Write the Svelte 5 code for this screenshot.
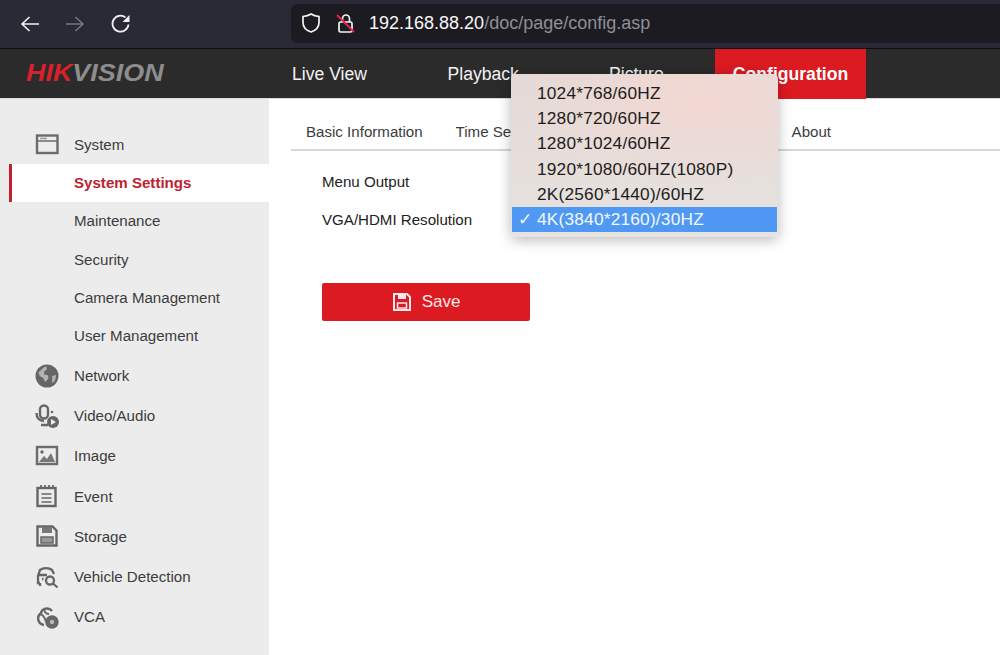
<script>
  const navItems = ["Live View", "Playback", "Picture", "Configuration"];
  const subItems = ["System Settings", "Maintenance", "Security", "Camera Management", "User Management"];
  const resolutions = ["1024*768/60HZ", "1280*720/60HZ", "1280*1024/60HZ", "1920*1080/60HZ(1080P)", "2K(2560*1440)/60HZ", "4K(3840*2160)/30HZ"];
  const bottomItems = [
    { key: "network", label: "Network" },
    { key: "video", label: "Video/Audio" },
    { key: "image", label: "Image" },
    { key: "event", label: "Event" },
    { key: "storage", label: "Storage" },
    { key: "vehicle", label: "Vehicle Detection" },
    { key: "vca", label: "VCA" }
  ];
</script>

<div class="page">
  <header class="browser">
    <div class="history">
      <svg width="20" height="20" viewBox="0 0 20 20" fill="none" stroke="#f2f2f4" stroke-width="1.6"><path d="M19 10H2M9.500 3 2 10l7.500 7"/></svg>
      <svg class="off" width="20" height="20" viewBox="0 0 20 20" fill="none" stroke="#77777f" stroke-width="1.500"><path d="M1 10h17M10.500 3l7.500 7-7.500 7"/></svg>
      <svg class="reload" width="20" height="20" viewBox="0 0 20 20" fill="none" stroke="#f2f2f4" stroke-width="1.800"><path d="M17.500 10.500A8 8 0 1 1 14.500 3.400"/><path d="M18.500 1v7h-7" fill="#f2f2f4" stroke="none"/></svg>
    </div>
    <div class="urlbar">
      <svg width="20" height="22" viewBox="0 0 20 22" fill="none" stroke="#f4f4f6" stroke-width="1.700"><path d="M10 2c2.500 1.700 5 2.300 8 2.500v6c0 4.500-3.500 8-8 9.500-4.500-1.500-8-5-8-9.500v-6C5 4.300 7.500 3.700 10 2z"/></svg>
      <svg class="lock" width="20" height="22" viewBox="0 0 20 22" fill="none"><path d="M6.500 10V6.500a3.500 3.500 0 0 1 7 0V10" stroke="#f4f4f6" stroke-width="1.700"/><rect x="3" y="10" width="13" height="10" rx="1.500" stroke="#f4f4f6" stroke-width="1.700"/><path d="M1 3l17 17" stroke="#e5264a" stroke-width="1.800"/></svg>
      <span class="url">192.168.88.20<span class="path">/doc/page/config.asp</span></span>
    </div>
  </header>

  <nav class="topnav">
    <div class="logo"><div class="wordmark"><span class="hik">HIK</span><span class="vision">VISION</span></div></div>
    <ul class="menu">
      {#each navItems as item}
        <li class:active={item === "Configuration"}>{item}</li>
      {/each}
    </ul>
  </nav>

  <div class="body">
    <aside class="sidebar">
      <div class="side-row first">
        <svg viewBox="0 0 24 24" width="24" height="24" fill="none" stroke="#6c6c6c" stroke-width="2.400"><rect x="2" y="3.500" width="20.500" height="17.500"/><path d="M3 9h19" stroke-width="1.500"/><path d="M5 6.500h7" stroke="#999" stroke-width="1.500"/></svg>
        <span>System</span>
      </div>
      {#each subItems as item, i}
        <div class="sub-row" class:selected={i === 0}>{item}</div>
      {/each}
      {#each bottomItems as item}
        <div class="side-row tall">
          {#if item.key === "network"}
            <svg viewBox="0 0 24 24" width="24" height="24"><circle cx="12" cy="12" r="11.500" fill="#666"/><path d="M3.500 8c3-1 4-5 7.500-5.500 2 2 0 4.500-2 4.500 1 2-1 3 1 4 3-1 4 2 3 4l-3 3c-1-2-1-4-3-5-2 0-3-2-3.500-5zM17 12l4-1c0 3-1 6-3 8-2-2 0-4-1-7z" fill="#b4b4b4"/></svg>
          {:else if item.key === "video"}
            <svg viewBox="0 0 24 24" width="24" height="24" fill="none"><rect x="5" y="1.500" width="8" height="13" rx="4" stroke="#666" stroke-width="2.400"/><path d="M1.500 9c0 5 3 8 7.500 8M6 21h7" stroke="#666" stroke-width="2.400"/><circle cx="17" cy="8" r="1.300" fill="#666"/><circle cx="18" cy="18" r="6" fill="#666"/><path d="M16 15l5 3-5 3z" fill="#ececec"/></svg>
          {:else if item.key === "image"}
            <svg viewBox="0 0 24 24" width="24" height="24" fill="none"><rect x="2" y="3" width="20" height="17" stroke="#6c6c6c" stroke-width="2.400"/><circle cx="7" cy="8" r="1.700" fill="#666"/><path d="M4 18l5-6 3 3 4-6 4 9z" fill="#777"/></svg>
          {:else if item.key === "event"}
            <svg viewBox="0 0 24 24" width="24" height="24" fill="none" stroke="#666" stroke-width="2.400"><rect x="2.500" y="4" width="18" height="18"/><path d="M6 1v4M10 1v4M14 1v4M18 1v4" stroke-width="1.700"/><path d="M6.500 10h10M6.500 14h10M6.500 18h10" stroke-width="1.500"/></svg>
          {:else if item.key === "storage"}
            <svg viewBox="0 0 24 24" width="24" height="24" fill="none"><path d="M2.500 2.500h15l4 4v15h-19z" stroke="#666" stroke-width="2.400"/><path d="M7 3h10v6H7z" fill="#777"/><path d="M6 13h12v6H6z" fill="#999" stroke="#666" stroke-width="1.500"/></svg>
          {:else if item.key === "vehicle"}
            <svg viewBox="0 0 24 24" width="24" height="24" fill="none" stroke="#666" stroke-width="2.300"><path d="M5 18H3v-7l2-6c3-2.500 9-2.500 12 0l2 4M3 10h9M5 18v3M7 14h1.500"/><circle cx="15" cy="15.500" r="4"/><path d="M18 18.500l4.500 4"/></svg>
          {:else}
            <svg viewBox="0 0 24 24" width="24" height="24" fill="none"><path d="M9 20C3 19 1 12 6 8c1-5 8-6 11-2" stroke="#666" stroke-width="2.400"/><path d="M4 9c4 0 6 4 7 8M10 3C8 6 11 9 14 9" stroke="#666" stroke-width="1.800"/><circle cx="17" cy="17" r="6.700" fill="#666"/><circle cx="17" cy="17" r="2.200" fill="#b8b8b8"/></svg>
          {/if}
          <span>{item.label}</span>
        </div>
      {/each}
    </aside>

    <main class="content">
      <div class="tabs">
        <span class="tab">Basic Information</span>
        <span class="tab time">Time Settings</span>
        <span class="tab about">About</span>
      </div>
      <div class="form">
        <div class="field">Menu Output</div>
        <div class="field">VGA/HDMI Resolution</div>
        <button class="save">
          <svg viewBox="0 0 20 20" width="20" height="20" fill="none"><path d="M2 2h13l3 3v13H2z" stroke="#fbe9ea" stroke-width="2"/><path d="M6 2h8v5H6z" fill="#fbe9ea"/><rect x="5.500" y="11" width="9" height="5" stroke="#fbe9ea" stroke-width="1.500"/></svg>
          Save
        </button>
      </div>
    </main>
  </div>

  <ul class="dropdown">
    {#each resolutions as res, i}
      <li class:checked={i === 5}>
        {#if i === 5}<span class="tick">✓</span>{/if}{res}
      </li>
    {/each}
  </ul>
</div>

<style>
  :global(body) {
    margin: 0;
    background: #fff;
  }
  .page {
    position: relative;
    width: 1000px;
    height: 655px;
    overflow: hidden;
    font-family: "Liberation Sans", Arial, sans-serif;
    color: #3c3c3c;
  }
  .browser {
    height: 49px;
    box-sizing: border-box;
    border-bottom: 1px solid #0e0e10;
    background: #2a2a36;
    display: flex;
    align-items: center;
    padding-left: 20px;
  }
  .history {
    display: flex;
    align-items: center;
    gap: 25px;
    width: 271px;
  }
  .reload {
    margin-left: 1px;
  }
  .urlbar {
    flex: 1;
    height: 39px;
    margin-top: -2px;
    background: #1c1b22;
    border-radius: 6px 0 0 6px;
    display: flex;
    align-items: center;
    padding-left: 10px;
    color: #f7f7f8;
  }
  .lock {
    margin-left: 15px;
  }
  .url {
    margin-left: 13px;
    font-size: 18px;
  }
  .path {
    color: #8f8f96;
  }
  .topnav {
    height: 50px;
    background: #2b2b2b;
    display: flex;
    border-bottom: 1px solid #dcdcdc;
    box-sizing: border-box;
  }
  .logo {
    width: 292px;
    box-sizing: border-box;
    padding: 11px 0 0 26px;
  }
  .wordmark {
    width: 120px;
    font-size: 23px;
    font-weight: 700;
    font-style: italic;
    white-space: nowrap;
    transform: scaleX(1.17);
    transform-origin: left center;
  }
  .hik {
    color: #d7212b;
  }
  .vision {
    color: #8d8d8d;
  }
  .menu {
    list-style: none;
    margin: 0;
    padding: 0;
    display: flex;
    color: #f2f2f2;
    font-size: 17.600px;
  }
  .menu li {
    width: 155.500px;
    padding-top: 15px;
    box-sizing: border-box;
  }
  .menu li:nth-child(2) {
    width: 161.500px;
  }
  .menu li:nth-child(3) {
    width: 106px;
  }
  .menu li.active {
    width: 151px;
    height: 50px;
    background: #dc1a22;
    color: #fff;
    font-weight: 700;
    text-align: center;
  }
  .body {
    display: flex;
    height: 556px;
  }
  .sidebar {
    width: 269px;
    background: #ececec;
    padding-top: 26px;
    box-sizing: border-box;
    font-size: 15.100px;
  }
  .side-row {
    height: 38px;
    display: flex;
    align-items: center;
    gap: 15px;
    padding-left: 35px;
  }
  .side-row.first {
    margin-bottom: 1px;
  }
  .side-row.tall {
    height: 40.200px;
  }
  .sub-row {
    height: 38.300px;
    line-height: 38.300px;
    padding-left: 74px;
  }
  .sub-row.selected {
    margin-left: 9px;
    background: #fff;
    border-left: 3px solid #c0202f;
    box-sizing: border-box;
    padding-left: 62px;
    color: #be2231;
    font-weight: 700;
  }
  .content {
    flex: 1;
    padding: 0 0 0 22px;
  }
  .tabs {
    height: 52px;
    box-sizing: border-box;
    border-bottom: 2px solid #d6d6d6;
    display: flex;
    gap: 33px;
    align-items: flex-end;
    padding: 0 0 9px 15px;
    font-size: 15.100px;
  }
  .tab {
    white-space: nowrap;
  }
  .time {
    width: 56px;
    overflow: hidden;
  }
  .about {
    margin-left: 247px;
  }
  .form {
    padding: 12px 0 0 31px;
    color: #222;
    font-size: 15.100px;
  }
  .field {
    height: 38px;
    line-height: 38px;
  }
  .save {
    margin-top: 44px;
    width: 208px;
    height: 38px;
    border: 0;
    border-radius: 2px;
    background: #dc1a22;
    color: #fbe9ea;
    font: 17px "Liberation Sans", Arial, sans-serif;
    display: flex;
    align-items: center;
    justify-content: center;
    gap: 10px;
  }
  .dropdown {
    position: absolute;
    left: 511px;
    top: 74px;
    width: 267px;
    height: 163px;
    box-sizing: border-box;
    list-style: none;
    margin: 0;
    padding: 7px 1px 0;
    border-radius: 5px;
    background: radial-gradient(ellipse 200px 90px at 70% 15%, #f3d8d3 0%, rgba(243, 216, 211, 0) 100%), linear-gradient(180deg, #e2d9d6 0%, #e8e3e0 100%);
    box-shadow: 0 3px 14px rgba(0, 0, 0, 0.28);
    color: #1d1d1d;
    font-size: 17.300px;
    letter-spacing: 0.2px;
  }
  .dropdown li {
    position: relative;
    height: 25.200px;
    line-height: 25.200px;
    padding-left: 25px;
  }
  .dropdown li.checked {
    background: #4f98f3;
    color: #f4f8fe;
  }
  .tick {
    position: absolute;
    left: 6px;
    font-size: 17px;
  }
</style>
